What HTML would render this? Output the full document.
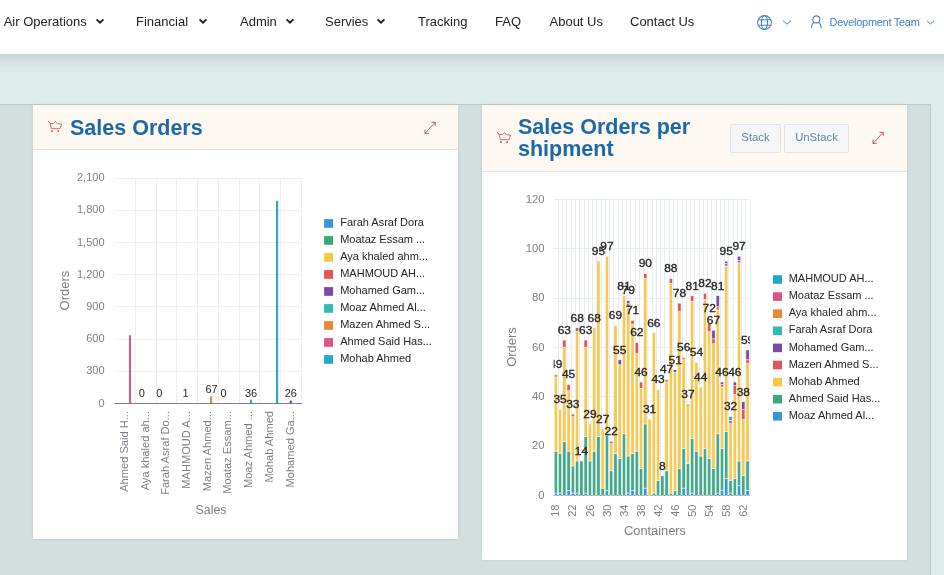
<!DOCTYPE html>
<html><head><meta charset="utf-8">
<style>
*{margin:0;padding:0;box-sizing:border-box}
html,body{width:944px;height:575px;overflow:hidden;background:#dfecec;font-family:"Liberation Sans", sans-serif}
#nav{position:absolute;left:0;top:0;width:944px;height:54px;background:#fff;z-index:5}
#navsh{position:absolute;left:-30px;top:0;width:1004px;height:54px;background:#fff;box-shadow:0 3px 16px rgba(50,85,80,0.22);z-index:4}
.nv{position:absolute;top:14px;font-size:13px;color:#222;white-space:nowrap;line-height:16px}
.chev{position:absolute}
#nav,.card,#charts{will-change:transform}
#wrap{position:absolute;left:0;top:104px;width:931px;height:480px;background:#d3dfdf;border-top:1px solid #bccaca;border-right:1px solid #bccaca}
.card{position:absolute;background:#fff;box-shadow:0 0 3px rgba(0,0,0,0.09)}
.hdr{position:absolute;left:0;top:0;width:100%;background:#fdf8f2;border-bottom:1px solid #e9e4df}
.ttl{position:absolute;font-weight:bold;font-size:21.5px;color:#1b69a8;line-height:21px}
.btn{position:absolute;top:19px;height:29px;background:#f5f6f8;border:1px solid #e1e3e6;border-radius:2px;font-size:11.3px;color:#6383aa;line-height:25px;text-align:center}
</style></head><body>
<div id="navsh"></div>
<div id="nav">
<span class="nv" style="left:3.7px">Air Operations</span>
<span class="nv" style="left:136px">Financial</span>
<span class="nv" style="left:240px">Admin</span>
<span class="nv" style="left:325px">Servies</span>
<span class="nv" style="left:418px">Tracking</span>
<span class="nv" style="left:495px">FAQ</span>
<span class="nv" style="left:549.5px">About Us</span>
<span class="nv" style="left:630px">Contact Us</span>
<svg class="chev" style="left:94.5px;top:17px" width="10" height="8" viewBox="0 0 10 8"><path d="M1.6 2.4 L5 5.6 L8.4 2.4" fill="none" stroke="#1e1e1e" stroke-width="1.9"/></svg>
<svg class="chev" style="left:197.5px;top:17px" width="10" height="8" viewBox="0 0 10 8"><path d="M1.6 2.4 L5 5.6 L8.4 2.4" fill="none" stroke="#1e1e1e" stroke-width="1.9"/></svg>
<svg class="chev" style="left:285px;top:17px" width="10" height="8" viewBox="0 0 10 8"><path d="M1.6 2.4 L5 5.6 L8.4 2.4" fill="none" stroke="#1e1e1e" stroke-width="1.9"/></svg>
<svg class="chev" style="left:376px;top:17px" width="10" height="8" viewBox="0 0 10 8"><path d="M1.6 2.4 L5 5.6 L8.4 2.4" fill="none" stroke="#1e1e1e" stroke-width="1.9"/></svg>
<svg style="position:absolute;left:756px;top:13.5px" width="17" height="17" viewBox="0 0 17 17">
<g fill="none" stroke="#4c80b8" stroke-width="1.1"><circle cx="8.5" cy="8.5" r="6.9"/><ellipse cx="8.5" cy="8.5" rx="3.1" ry="6.9"/><path d="M2.1 5.8H14.9M2.1 11.2H14.9"/></g></svg>
<svg style="position:absolute;left:782px;top:19.5px" width="10" height="5" viewBox="0 0 10 5"><path d="M1 0.8 L5 4.2 L9 0.8" fill="none" stroke="#4a86c6" stroke-width="1"/></svg>
<svg style="position:absolute;left:809px;top:15px" width="14" height="14" viewBox="0 0 14 14">
<g fill="none" stroke="#4c80b8" stroke-width="1.1" stroke-linecap="round"><circle cx="7.3" cy="4.4" r="3.5"/><path d="M5.3 7.6 C3.2 8.4 2.6 10.4 2.5 12.6"/><path d="M9.3 7.6 C11.4 8.4 12 10.4 12.1 12.6"/></g></svg>
<span class="nv" style="left:829.5px;top:14px;font-size:11px;color:#4380c3;letter-spacing:-0.28px">Development Team</span>
<svg style="position:absolute;left:926px;top:19.5px" width="9" height="5" viewBox="0 0 9 5"><path d="M1 0.8 L4.5 4 L8 0.8" fill="none" stroke="#4a86c6" stroke-width="1"/></svg>
</div>
<div id="wrap"></div>
<div class="card" style="left:33px;top:105px;width:425px;height:434px">
  <div class="hdr" style="height:45px"></div>
  <svg style="position:absolute;left:14px;top:15px" width="16" height="13" viewBox="0 0 16 13">
<g fill="none" stroke="#de5562" stroke-width="0.9" stroke-linejoin="round" stroke-linecap="round"><path d="M1.3 1.3 L3 3.3 L6.4 3.5 L8.5 1.5 L10.5 3.8 L14.6 4.1 L13 8.7 L4.3 8.7 L3 3.3"/></g>
<g fill="#a8353f"><circle cx="5" cy="11.1" r="0.95"/><circle cx="11.3" cy="11.1" r="0.95"/></g></svg>
  <div class="ttl" style="left:37px;top:13px">Sales Orders</div>
  <svg style="position:absolute;left:389.5px;top:14.5px" width="15" height="15" viewBox="0 0 15 15">
<g fill="none" stroke="#c8404f" stroke-width="0.85" stroke-linecap="round"><path d="M2.2 13.2 L12 2.6"/><path d="M9 2.3 H12.3 V5.6"/><path d="M2 10 V13.4 H5.3"/></g></svg>
  <div id="c1" style="position:absolute;left:0;top:0"><!--CHART1--></div>
</div>
<div class="card" style="left:482px;top:105px;width:425px;height:455px">
  <div class="hdr" style="height:67px"></div>
  <svg style="position:absolute;left:14.2px;top:25.7px" width="16" height="13" viewBox="0 0 16 13">
<g fill="none" stroke="#de5562" stroke-width="0.9" stroke-linejoin="round" stroke-linecap="round"><path d="M1.3 1.3 L3 3.3 L6.4 3.5 L8.5 1.5 L10.5 3.8 L14.6 4.1 L13 8.7 L4.3 8.7 L3 3.3"/></g>
<g fill="#a8353f"><circle cx="5" cy="11.1" r="0.95"/><circle cx="11.3" cy="11.1" r="0.95"/></g></svg>
  <div class="ttl" style="left:36px;top:12px;width:200px;line-height:21.5px">Sales Orders per shipment</div>
  <div class="btn" style="left:248px;width:51px">Stack</div>
  <div class="btn" style="left:302px;width:65px">UnStack</div>
  <svg style="position:absolute;left:389px;top:25px" width="15" height="15" viewBox="0 0 15 15">
<g fill="none" stroke="#c8404f" stroke-width="0.85" stroke-linecap="round"><path d="M2.2 13.2 L12 2.6"/><path d="M9 2.3 H12.3 V5.6"/><path d="M2 10 V13.4 H5.3"/></g></svg>
  <div id="c2" style="position:absolute;left:0;top:0"><!--CHART2--></div>
</div>
<svg id="charts" style="position:absolute;left:0;top:0;z-index:3" width="944" height="575" viewBox="0 0 944 575" font-family="Liberation Sans, sans-serif">
<line x1="114.5" y1="371.50" x2="302.0" y2="371.50" stroke="#eeeeee" stroke-width="1"/>
<line x1="114.5" y1="339.50" x2="302.0" y2="339.50" stroke="#eeeeee" stroke-width="1"/>
<line x1="114.5" y1="306.50" x2="302.0" y2="306.50" stroke="#eeeeee" stroke-width="1"/>
<line x1="114.5" y1="274.50" x2="302.0" y2="274.50" stroke="#eeeeee" stroke-width="1"/>
<line x1="114.5" y1="242.50" x2="302.0" y2="242.50" stroke="#eeeeee" stroke-width="1"/>
<line x1="114.5" y1="210.50" x2="302.0" y2="210.50" stroke="#eeeeee" stroke-width="1"/>
<line x1="114.5" y1="178.50" x2="302.0" y2="178.50" stroke="#eeeeee" stroke-width="1"/>
<line x1="135.50" y1="178.50" x2="135.50" y2="403.5" stroke="#eeeeee" stroke-width="1"/>
<line x1="156.50" y1="178.50" x2="156.50" y2="403.5" stroke="#eeeeee" stroke-width="1"/>
<line x1="176.50" y1="178.50" x2="176.50" y2="403.5" stroke="#eeeeee" stroke-width="1"/>
<line x1="197.50" y1="178.50" x2="197.50" y2="403.5" stroke="#eeeeee" stroke-width="1"/>
<line x1="218.50" y1="178.50" x2="218.50" y2="403.5" stroke="#eeeeee" stroke-width="1"/>
<line x1="239.50" y1="178.50" x2="239.50" y2="403.5" stroke="#eeeeee" stroke-width="1"/>
<line x1="259.50" y1="178.50" x2="259.50" y2="403.5" stroke="#eeeeee" stroke-width="1"/>
<line x1="280.50" y1="178.50" x2="280.50" y2="403.5" stroke="#eeeeee" stroke-width="1"/>
<line x1="301.50" y1="178.50" x2="301.50" y2="403.5" stroke="#eeeeee" stroke-width="1"/>
<text x="104.5" y="406.50" text-anchor="end" font-size="11" fill="#7d7f86">0</text>
<text x="104.5" y="374.30" text-anchor="end" font-size="11" fill="#7d7f86">300</text>
<text x="104.5" y="342.10" text-anchor="end" font-size="11" fill="#7d7f86">600</text>
<text x="104.5" y="309.90" text-anchor="end" font-size="11" fill="#7d7f86">900</text>
<text x="104.5" y="277.70" text-anchor="end" font-size="11" fill="#7d7f86">1,200</text>
<text x="104.5" y="245.50" text-anchor="end" font-size="11" fill="#7d7f86">1,500</text>
<text x="104.5" y="213.30" text-anchor="end" font-size="11" fill="#7d7f86">1,800</text>
<text x="104.5" y="181.10" text-anchor="end" font-size="11" fill="#7d7f86">2,100</text>
<text transform="translate(69,290.6) rotate(-90)" text-anchor="middle" font-size="13" fill="#7d7f86">Orders</text>
<text x="211" y="513.8" text-anchor="middle" font-size="12.3" fill="#7d7f86">Sales</text>
<rect x="128.90" y="335.24" width="2.2" height="68.26" fill="#c2658e"/>
<rect x="276.00" y="200.75" width="2.2" height="202.75" fill="#2ea7c1"/>
<rect x="210.00" y="396.31" width="2.2" height="7.19" fill="#e08a4a"/>
<rect x="249.90" y="399.64" width="2.2" height="3.86" fill="#3bb0a6"/>
<rect x="289.70" y="400.71" width="2.2" height="2.79" fill="#5a4a78"/>
<line x1="114.5" y1="403.5" x2="302.0" y2="403.5" stroke="#7d7f86" stroke-width="1"/>
<text x="141.8" y="397.2" text-anchor="middle" font-size="11" fill="#262626">0</text>
<text x="159.2" y="397.2" text-anchor="middle" font-size="11" fill="#262626">0</text>
<text x="185.6" y="397.2" text-anchor="middle" font-size="11" fill="#262626">1</text>
<text x="211.5" y="393.2" text-anchor="middle" font-size="11" fill="#262626">67</text>
<text x="223.5" y="397.2" text-anchor="middle" font-size="11" fill="#262626">0</text>
<text x="251.0" y="396.6" text-anchor="middle" font-size="11" fill="#262626">36</text>
<text x="290.8" y="396.9" text-anchor="middle" font-size="11" fill="#262626">26</text>
<text transform="translate(127.80,411) rotate(-90)" text-anchor="end" font-size="11.1" fill="#7d7f86">Ahmed Said H...</text>
<text transform="translate(148.53,411) rotate(-90)" text-anchor="end" font-size="11.1" fill="#7d7f86">Aya khaled ah...</text>
<text transform="translate(169.26,411) rotate(-90)" text-anchor="end" font-size="11.1" fill="#7d7f86">Farah Asraf Do...</text>
<text transform="translate(189.99,411) rotate(-90)" text-anchor="end" font-size="11.1" fill="#7d7f86">MAHMOUD A...</text>
<text transform="translate(210.72,411) rotate(-90)" text-anchor="end" font-size="11.1" fill="#7d7f86">Mazen Ahmed...</text>
<text transform="translate(231.45,411) rotate(-90)" text-anchor="end" font-size="11.1" fill="#7d7f86">Moataz Essam...</text>
<text transform="translate(252.18,411) rotate(-90)" text-anchor="end" font-size="11.1" fill="#7d7f86">Moaz Ahmed ...</text>
<text transform="translate(272.91,411) rotate(-90)" text-anchor="end" font-size="11.1" fill="#7d7f86">Mohab Ahmed</text>
<text transform="translate(293.64,411) rotate(-90)" text-anchor="end" font-size="11.1" fill="#7d7f86">Mohamed Ga...</text>
<rect x="324.1" y="219.10" width="9" height="8.7" fill="#3398db"/>
<text x="340.2" y="226.40" font-size="11" fill="#262626">Farah Asraf Dora</text>
<rect x="324.1" y="236.10" width="9" height="8.7" fill="#3ba87a"/>
<text x="340.2" y="243.40" font-size="11" fill="#262626">Moataz Essam ...</text>
<rect x="324.1" y="253.10" width="9" height="8.7" fill="#f5c843"/>
<text x="340.2" y="260.40" font-size="11" fill="#262626">Aya khaled ahm...</text>
<rect x="324.1" y="270.10" width="9" height="8.7" fill="#e0555a"/>
<text x="340.2" y="277.40" font-size="11" fill="#262626">MAHMOUD AH...</text>
<rect x="324.1" y="287.10" width="9" height="8.7" fill="#7c4aa3"/>
<text x="340.2" y="294.40" font-size="11" fill="#262626">Mohamed Gam...</text>
<rect x="324.1" y="304.10" width="9" height="8.7" fill="#2fbcb0"/>
<text x="340.2" y="311.40" font-size="11" fill="#262626">Moaz Ahmed Al...</text>
<rect x="324.1" y="321.10" width="9" height="8.7" fill="#ef8434"/>
<text x="340.2" y="328.40" font-size="11" fill="#262626">Mazen Ahmed S...</text>
<rect x="324.1" y="338.10" width="9" height="8.7" fill="#df5189"/>
<text x="340.2" y="345.40" font-size="11" fill="#262626">Ahmed Said Has...</text>
<rect x="324.1" y="355.10" width="9" height="8.7" fill="#1ea8cb"/>
<text x="340.2" y="362.40" font-size="11" fill="#262626">Mohab Ahmed</text>
<line x1="553.7" y1="446.50" x2="749.7" y2="446.50" stroke="#e8ecf4" stroke-width="1"/>
<line x1="553.7" y1="396.50" x2="749.7" y2="396.50" stroke="#e8ecf4" stroke-width="1"/>
<line x1="553.7" y1="347.50" x2="749.7" y2="347.50" stroke="#e8ecf4" stroke-width="1"/>
<line x1="553.7" y1="298.50" x2="749.7" y2="298.50" stroke="#e8ecf4" stroke-width="1"/>
<line x1="553.7" y1="248.50" x2="749.7" y2="248.50" stroke="#e8ecf4" stroke-width="1"/>
<line x1="553.7" y1="199.50" x2="749.7" y2="199.50" stroke="#e8ecf4" stroke-width="1"/>
<line x1="558.50" y1="199.50" x2="558.50" y2="495.5" stroke="#e8ecf4" stroke-width="1"/>
<line x1="562.50" y1="199.50" x2="562.50" y2="495.5" stroke="#e8ecf4" stroke-width="1"/>
<line x1="566.50" y1="199.50" x2="566.50" y2="495.5" stroke="#e8ecf4" stroke-width="1"/>
<line x1="571.50" y1="199.50" x2="571.50" y2="495.5" stroke="#e8ecf4" stroke-width="1"/>
<line x1="575.50" y1="199.50" x2="575.50" y2="495.5" stroke="#e8ecf4" stroke-width="1"/>
<line x1="579.50" y1="199.50" x2="579.50" y2="495.5" stroke="#e8ecf4" stroke-width="1"/>
<line x1="584.50" y1="199.50" x2="584.50" y2="495.5" stroke="#e8ecf4" stroke-width="1"/>
<line x1="588.50" y1="199.50" x2="588.50" y2="495.5" stroke="#e8ecf4" stroke-width="1"/>
<line x1="592.50" y1="199.50" x2="592.50" y2="495.5" stroke="#e8ecf4" stroke-width="1"/>
<line x1="596.50" y1="199.50" x2="596.50" y2="495.5" stroke="#e8ecf4" stroke-width="1"/>
<line x1="601.50" y1="199.50" x2="601.50" y2="495.5" stroke="#e8ecf4" stroke-width="1"/>
<line x1="605.50" y1="199.50" x2="605.50" y2="495.5" stroke="#e8ecf4" stroke-width="1"/>
<line x1="609.50" y1="199.50" x2="609.50" y2="495.5" stroke="#e8ecf4" stroke-width="1"/>
<line x1="613.50" y1="199.50" x2="613.50" y2="495.5" stroke="#e8ecf4" stroke-width="1"/>
<line x1="618.50" y1="199.50" x2="618.50" y2="495.5" stroke="#e8ecf4" stroke-width="1"/>
<line x1="622.50" y1="199.50" x2="622.50" y2="495.5" stroke="#e8ecf4" stroke-width="1"/>
<line x1="626.50" y1="199.50" x2="626.50" y2="495.5" stroke="#e8ecf4" stroke-width="1"/>
<line x1="630.50" y1="199.50" x2="630.50" y2="495.5" stroke="#e8ecf4" stroke-width="1"/>
<line x1="635.50" y1="199.50" x2="635.50" y2="495.5" stroke="#e8ecf4" stroke-width="1"/>
<line x1="639.50" y1="199.50" x2="639.50" y2="495.5" stroke="#e8ecf4" stroke-width="1"/>
<line x1="643.50" y1="199.50" x2="643.50" y2="495.5" stroke="#e8ecf4" stroke-width="1"/>
<line x1="647.50" y1="199.50" x2="647.50" y2="495.5" stroke="#e8ecf4" stroke-width="1"/>
<line x1="652.50" y1="199.50" x2="652.50" y2="495.5" stroke="#e8ecf4" stroke-width="1"/>
<line x1="656.50" y1="199.50" x2="656.50" y2="495.5" stroke="#e8ecf4" stroke-width="1"/>
<line x1="660.50" y1="199.50" x2="660.50" y2="495.5" stroke="#e8ecf4" stroke-width="1"/>
<line x1="664.50" y1="199.50" x2="664.50" y2="495.5" stroke="#e8ecf4" stroke-width="1"/>
<line x1="669.50" y1="199.50" x2="669.50" y2="495.5" stroke="#e8ecf4" stroke-width="1"/>
<line x1="673.50" y1="199.50" x2="673.50" y2="495.5" stroke="#e8ecf4" stroke-width="1"/>
<line x1="677.50" y1="199.50" x2="677.50" y2="495.5" stroke="#e8ecf4" stroke-width="1"/>
<line x1="682.50" y1="199.50" x2="682.50" y2="495.5" stroke="#e8ecf4" stroke-width="1"/>
<line x1="686.50" y1="199.50" x2="686.50" y2="495.5" stroke="#e8ecf4" stroke-width="1"/>
<line x1="690.50" y1="199.50" x2="690.50" y2="495.5" stroke="#e8ecf4" stroke-width="1"/>
<line x1="694.50" y1="199.50" x2="694.50" y2="495.5" stroke="#e8ecf4" stroke-width="1"/>
<line x1="699.50" y1="199.50" x2="699.50" y2="495.5" stroke="#e8ecf4" stroke-width="1"/>
<line x1="703.50" y1="199.50" x2="703.50" y2="495.5" stroke="#e8ecf4" stroke-width="1"/>
<line x1="707.50" y1="199.50" x2="707.50" y2="495.5" stroke="#e8ecf4" stroke-width="1"/>
<line x1="711.50" y1="199.50" x2="711.50" y2="495.5" stroke="#e8ecf4" stroke-width="1"/>
<line x1="716.50" y1="199.50" x2="716.50" y2="495.5" stroke="#e8ecf4" stroke-width="1"/>
<line x1="720.50" y1="199.50" x2="720.50" y2="495.5" stroke="#e8ecf4" stroke-width="1"/>
<line x1="724.50" y1="199.50" x2="724.50" y2="495.5" stroke="#e8ecf4" stroke-width="1"/>
<line x1="728.50" y1="199.50" x2="728.50" y2="495.5" stroke="#e8ecf4" stroke-width="1"/>
<line x1="733.50" y1="199.50" x2="733.50" y2="495.5" stroke="#e8ecf4" stroke-width="1"/>
<line x1="737.50" y1="199.50" x2="737.50" y2="495.5" stroke="#e8ecf4" stroke-width="1"/>
<line x1="741.50" y1="199.50" x2="741.50" y2="495.5" stroke="#e8ecf4" stroke-width="1"/>
<line x1="745.50" y1="199.50" x2="745.50" y2="495.5" stroke="#e8ecf4" stroke-width="1"/>
<line x1="750.50" y1="199.50" x2="750.50" y2="495.5" stroke="#e8ecf4" stroke-width="1"/>
<text x="544.5" y="498.70" text-anchor="end" font-size="11.3" fill="#7d7f86">0</text>
<text x="544.5" y="449.37" text-anchor="end" font-size="11.3" fill="#7d7f86">20</text>
<text x="544.5" y="400.03" text-anchor="end" font-size="11.3" fill="#7d7f86">40</text>
<text x="544.5" y="350.70" text-anchor="end" font-size="11.3" fill="#7d7f86">60</text>
<text x="544.5" y="301.36" text-anchor="end" font-size="11.3" fill="#7d7f86">80</text>
<text x="544.5" y="252.03" text-anchor="end" font-size="11.3" fill="#7d7f86">100</text>
<text x="544.5" y="202.70" text-anchor="end" font-size="11.3" fill="#7d7f86">120</text>
<text transform="translate(516.2,347) rotate(-90)" text-anchor="middle" font-size="13" fill="#7d7f86">Orders</text>
<text x="655" y="534.6" text-anchor="middle" font-size="12.8" fill="#7d7f86">Containers</text>
<line x1="553.7" y1="495.5" x2="749.7" y2="495.5" stroke="#7d7f86" stroke-width="1"/>
<rect x="554.20" y="493.03" width="3.26" height="2.47" fill="#3398db" stroke="#fff" stroke-width="0.5"/>
<rect x="554.20" y="451.10" width="3.26" height="41.93" fill="#46a88a" stroke="#fff" stroke-width="0.5"/>
<rect x="554.20" y="377.10" width="3.26" height="74.00" fill="#f3ca58" stroke="#fff" stroke-width="0.5"/>
<rect x="554.20" y="374.63" width="3.26" height="2.47" fill="#ef8434" stroke="#fff" stroke-width="0.5"/>
<rect x="558.46" y="493.03" width="3.26" height="2.47" fill="#3398db" stroke="#fff" stroke-width="0.5"/>
<rect x="558.46" y="453.57" width="3.26" height="39.47" fill="#46a88a" stroke="#fff" stroke-width="0.5"/>
<rect x="558.46" y="409.17" width="3.26" height="44.40" fill="#f3ca58" stroke="#fff" stroke-width="0.5"/>
<rect x="562.72" y="441.23" width="3.26" height="54.27" fill="#46a88a" stroke="#fff" stroke-width="0.5"/>
<rect x="562.72" y="347.50" width="3.26" height="93.73" fill="#f3ca58" stroke="#fff" stroke-width="0.5"/>
<rect x="562.72" y="340.10" width="3.26" height="7.40" fill="#e0555a" stroke="#fff" stroke-width="0.5"/>
<rect x="566.98" y="490.57" width="3.26" height="4.93" fill="#3398db" stroke="#fff" stroke-width="0.5"/>
<rect x="566.98" y="451.10" width="3.26" height="39.47" fill="#46a88a" stroke="#fff" stroke-width="0.5"/>
<rect x="566.98" y="390.67" width="3.26" height="60.43" fill="#f3ca58" stroke="#fff" stroke-width="0.5"/>
<rect x="566.98" y="384.50" width="3.26" height="6.17" fill="#e0555a" stroke="#fff" stroke-width="0.5"/>
<rect x="571.24" y="493.03" width="3.26" height="2.47" fill="#3398db" stroke="#fff" stroke-width="0.5"/>
<rect x="571.24" y="465.90" width="3.26" height="27.13" fill="#46a88a" stroke="#fff" stroke-width="0.5"/>
<rect x="571.24" y="416.57" width="3.26" height="49.33" fill="#f3ca58" stroke="#fff" stroke-width="0.5"/>
<rect x="571.24" y="414.10" width="3.26" height="2.47" fill="#e0555a" stroke="#fff" stroke-width="0.5"/>
<rect x="575.50" y="493.03" width="3.26" height="2.47" fill="#3398db" stroke="#fff" stroke-width="0.5"/>
<rect x="575.50" y="460.97" width="3.26" height="32.07" fill="#46a88a" stroke="#fff" stroke-width="0.5"/>
<rect x="575.50" y="331.46" width="3.26" height="129.50" fill="#f3ca58" stroke="#fff" stroke-width="0.5"/>
<rect x="575.50" y="327.76" width="3.26" height="3.70" fill="#e0555a" stroke="#fff" stroke-width="0.5"/>
<rect x="579.77" y="460.97" width="3.26" height="34.53" fill="#46a88a" stroke="#fff" stroke-width="0.5"/>
<rect x="584.03" y="493.03" width="3.26" height="2.47" fill="#3398db" stroke="#fff" stroke-width="0.5"/>
<rect x="584.03" y="436.30" width="3.26" height="56.73" fill="#46a88a" stroke="#fff" stroke-width="0.5"/>
<rect x="584.03" y="347.50" width="3.26" height="88.80" fill="#f3ca58" stroke="#fff" stroke-width="0.5"/>
<rect x="584.03" y="340.10" width="3.26" height="7.40" fill="#e0555a" stroke="#fff" stroke-width="0.5"/>
<rect x="588.29" y="460.97" width="3.26" height="34.53" fill="#46a88a" stroke="#fff" stroke-width="0.5"/>
<rect x="588.29" y="423.97" width="3.26" height="37.00" fill="#f3ca58" stroke="#fff" stroke-width="0.5"/>
<rect x="592.55" y="451.10" width="3.26" height="44.40" fill="#46a88a" stroke="#fff" stroke-width="0.5"/>
<rect x="592.55" y="327.76" width="3.26" height="123.33" fill="#f3ca58" stroke="#fff" stroke-width="0.5"/>
<rect x="596.81" y="436.30" width="3.26" height="59.20" fill="#46a88a" stroke="#fff" stroke-width="0.5"/>
<rect x="596.81" y="262.64" width="3.26" height="173.66" fill="#f3ca58" stroke="#fff" stroke-width="0.5"/>
<rect x="596.81" y="261.16" width="3.26" height="1.48" fill="#ef8434" stroke="#fff" stroke-width="0.5"/>
<rect x="601.07" y="488.10" width="3.26" height="7.40" fill="#46a88a" stroke="#fff" stroke-width="0.5"/>
<rect x="601.07" y="428.90" width="3.26" height="59.20" fill="#f3ca58" stroke="#fff" stroke-width="0.5"/>
<rect x="605.33" y="490.57" width="3.26" height="4.93" fill="#3398db" stroke="#fff" stroke-width="0.5"/>
<rect x="605.33" y="435.07" width="3.26" height="55.50" fill="#46a88a" stroke="#fff" stroke-width="0.5"/>
<rect x="605.33" y="256.23" width="3.26" height="178.84" fill="#f3ca58" stroke="#fff" stroke-width="0.5"/>
<rect x="609.59" y="470.83" width="3.26" height="24.67" fill="#46a88a" stroke="#fff" stroke-width="0.5"/>
<rect x="609.59" y="443.70" width="3.26" height="27.13" fill="#f3ca58" stroke="#fff" stroke-width="0.5"/>
<rect x="609.59" y="441.23" width="3.26" height="2.47" fill="#e0555a" stroke="#fff" stroke-width="0.5"/>
<rect x="613.85" y="453.57" width="3.26" height="41.93" fill="#46a88a" stroke="#fff" stroke-width="0.5"/>
<rect x="613.85" y="325.30" width="3.26" height="128.27" fill="#f3ca58" stroke="#fff" stroke-width="0.5"/>
<rect x="618.11" y="458.50" width="3.26" height="37.00" fill="#46a88a" stroke="#fff" stroke-width="0.5"/>
<rect x="618.11" y="364.76" width="3.26" height="93.73" fill="#f3ca58" stroke="#fff" stroke-width="0.5"/>
<rect x="618.11" y="359.83" width="3.26" height="4.93" fill="#7c4aa3" stroke="#fff" stroke-width="0.5"/>
<rect x="622.37" y="433.83" width="3.26" height="61.67" fill="#46a88a" stroke="#fff" stroke-width="0.5"/>
<rect x="622.37" y="295.70" width="3.26" height="138.14" fill="#f3ca58" stroke="#fff" stroke-width="0.5"/>
<rect x="626.63" y="493.03" width="3.26" height="2.47" fill="#3398db" stroke="#fff" stroke-width="0.5"/>
<rect x="626.63" y="456.03" width="3.26" height="37.00" fill="#46a88a" stroke="#fff" stroke-width="0.5"/>
<rect x="626.63" y="307.29" width="3.26" height="148.74" fill="#f3ca58" stroke="#fff" stroke-width="0.5"/>
<rect x="626.63" y="303.59" width="3.26" height="3.70" fill="#e0555a" stroke="#fff" stroke-width="0.5"/>
<rect x="626.63" y="300.63" width="3.26" height="2.96" fill="#7c4aa3" stroke="#fff" stroke-width="0.5"/>
<rect x="630.90" y="490.57" width="3.26" height="4.93" fill="#3398db" stroke="#fff" stroke-width="0.5"/>
<rect x="630.90" y="453.57" width="3.26" height="37.00" fill="#46a88a" stroke="#fff" stroke-width="0.5"/>
<rect x="630.90" y="324.06" width="3.26" height="129.50" fill="#f3ca58" stroke="#fff" stroke-width="0.5"/>
<rect x="630.90" y="320.36" width="3.26" height="3.70" fill="#e0555a" stroke="#fff" stroke-width="0.5"/>
<rect x="635.16" y="451.10" width="3.26" height="44.40" fill="#46a88a" stroke="#fff" stroke-width="0.5"/>
<rect x="635.16" y="353.66" width="3.26" height="97.43" fill="#f3ca58" stroke="#fff" stroke-width="0.5"/>
<rect x="635.16" y="342.56" width="3.26" height="11.10" fill="#e0555a" stroke="#fff" stroke-width="0.5"/>
<rect x="639.42" y="468.37" width="3.26" height="27.13" fill="#46a88a" stroke="#fff" stroke-width="0.5"/>
<rect x="639.42" y="388.20" width="3.26" height="80.17" fill="#f3ca58" stroke="#fff" stroke-width="0.5"/>
<rect x="639.42" y="382.03" width="3.26" height="6.17" fill="#e0555a" stroke="#fff" stroke-width="0.5"/>
<rect x="643.68" y="488.10" width="3.26" height="7.40" fill="#3398db" stroke="#fff" stroke-width="0.5"/>
<rect x="643.68" y="423.97" width="3.26" height="64.13" fill="#46a88a" stroke="#fff" stroke-width="0.5"/>
<rect x="643.68" y="278.43" width="3.26" height="145.54" fill="#f3ca58" stroke="#fff" stroke-width="0.5"/>
<rect x="643.68" y="273.50" width="3.26" height="4.93" fill="#e0555a" stroke="#fff" stroke-width="0.5"/>
<rect x="647.94" y="419.03" width="3.26" height="76.47" fill="#f3ca58" stroke="#fff" stroke-width="0.5"/>
<rect x="652.20" y="493.03" width="3.26" height="2.47" fill="#46a88a" stroke="#fff" stroke-width="0.5"/>
<rect x="652.20" y="332.70" width="3.26" height="160.34" fill="#f3ca58" stroke="#fff" stroke-width="0.5"/>
<rect x="656.46" y="480.70" width="3.26" height="14.80" fill="#46a88a" stroke="#fff" stroke-width="0.5"/>
<rect x="656.46" y="389.43" width="3.26" height="91.27" fill="#f3ca58" stroke="#fff" stroke-width="0.5"/>
<rect x="660.72" y="475.77" width="3.26" height="19.73" fill="#46a88a" stroke="#fff" stroke-width="0.5"/>
<rect x="664.98" y="470.83" width="3.26" height="24.67" fill="#46a88a" stroke="#fff" stroke-width="0.5"/>
<rect x="664.98" y="382.03" width="3.26" height="88.80" fill="#f3ca58" stroke="#fff" stroke-width="0.5"/>
<rect x="664.98" y="379.57" width="3.26" height="2.47" fill="#ef8434" stroke="#fff" stroke-width="0.5"/>
<rect x="669.24" y="493.03" width="3.26" height="2.47" fill="#46a88a" stroke="#fff" stroke-width="0.5"/>
<rect x="669.24" y="283.36" width="3.26" height="209.67" fill="#f3ca58" stroke="#fff" stroke-width="0.5"/>
<rect x="669.24" y="278.43" width="3.26" height="4.93" fill="#e0555a" stroke="#fff" stroke-width="0.5"/>
<rect x="673.50" y="490.57" width="3.26" height="4.93" fill="#46a88a" stroke="#fff" stroke-width="0.5"/>
<rect x="673.50" y="372.17" width="3.26" height="118.40" fill="#f3ca58" stroke="#fff" stroke-width="0.5"/>
<rect x="673.50" y="369.70" width="3.26" height="2.47" fill="#7c4aa3" stroke="#fff" stroke-width="0.5"/>
<rect x="677.77" y="468.37" width="3.26" height="27.13" fill="#46a88a" stroke="#fff" stroke-width="0.5"/>
<rect x="677.77" y="311.48" width="3.26" height="156.88" fill="#f3ca58" stroke="#fff" stroke-width="0.5"/>
<rect x="677.77" y="303.10" width="3.26" height="8.39" fill="#e0555a" stroke="#fff" stroke-width="0.5"/>
<rect x="682.03" y="488.10" width="3.26" height="7.40" fill="#3398db" stroke="#fff" stroke-width="0.5"/>
<rect x="682.03" y="448.63" width="3.26" height="39.47" fill="#46a88a" stroke="#fff" stroke-width="0.5"/>
<rect x="682.03" y="359.83" width="3.26" height="88.80" fill="#f3ca58" stroke="#fff" stroke-width="0.5"/>
<rect x="682.03" y="357.36" width="3.26" height="2.47" fill="#ef8434" stroke="#fff" stroke-width="0.5"/>
<rect x="686.29" y="463.43" width="3.26" height="32.07" fill="#46a88a" stroke="#fff" stroke-width="0.5"/>
<rect x="686.29" y="406.70" width="3.26" height="56.73" fill="#f3ca58" stroke="#fff" stroke-width="0.5"/>
<rect x="686.29" y="404.23" width="3.26" height="2.47" fill="#ef8434" stroke="#fff" stroke-width="0.5"/>
<rect x="690.55" y="493.03" width="3.26" height="2.47" fill="#3398db" stroke="#fff" stroke-width="0.5"/>
<rect x="690.55" y="438.77" width="3.26" height="54.27" fill="#46a88a" stroke="#fff" stroke-width="0.5"/>
<rect x="690.55" y="301.37" width="3.26" height="137.40" fill="#f3ca58" stroke="#fff" stroke-width="0.5"/>
<rect x="690.55" y="295.70" width="3.26" height="5.67" fill="#e0555a" stroke="#fff" stroke-width="0.5"/>
<rect x="694.81" y="451.10" width="3.26" height="44.40" fill="#46a88a" stroke="#fff" stroke-width="0.5"/>
<rect x="694.81" y="362.30" width="3.26" height="88.80" fill="#f3ca58" stroke="#fff" stroke-width="0.5"/>
<rect x="699.07" y="456.03" width="3.26" height="39.47" fill="#46a88a" stroke="#fff" stroke-width="0.5"/>
<rect x="699.07" y="386.97" width="3.26" height="69.07" fill="#f3ca58" stroke="#fff" stroke-width="0.5"/>
<rect x="703.33" y="448.63" width="3.26" height="46.87" fill="#46a88a" stroke="#fff" stroke-width="0.5"/>
<rect x="703.33" y="299.40" width="3.26" height="149.24" fill="#f3ca58" stroke="#fff" stroke-width="0.5"/>
<rect x="703.33" y="293.23" width="3.26" height="6.17" fill="#e0555a" stroke="#fff" stroke-width="0.5"/>
<rect x="707.59" y="458.50" width="3.26" height="37.00" fill="#46a88a" stroke="#fff" stroke-width="0.5"/>
<rect x="707.59" y="331.71" width="3.26" height="126.79" fill="#f3ca58" stroke="#fff" stroke-width="0.5"/>
<rect x="707.59" y="323.32" width="3.26" height="8.39" fill="#e0555a" stroke="#fff" stroke-width="0.5"/>
<rect x="711.85" y="468.37" width="3.26" height="27.13" fill="#46a88a" stroke="#fff" stroke-width="0.5"/>
<rect x="711.85" y="343.80" width="3.26" height="124.57" fill="#f3ca58" stroke="#fff" stroke-width="0.5"/>
<rect x="711.85" y="338.86" width="3.26" height="4.93" fill="#e0555a" stroke="#fff" stroke-width="0.5"/>
<rect x="711.85" y="330.23" width="3.26" height="8.63" fill="#7c4aa3" stroke="#fff" stroke-width="0.5"/>
<rect x="716.11" y="493.03" width="3.26" height="2.47" fill="#3398db" stroke="#fff" stroke-width="0.5"/>
<rect x="716.11" y="433.83" width="3.26" height="59.20" fill="#46a88a" stroke="#fff" stroke-width="0.5"/>
<rect x="716.11" y="310.00" width="3.26" height="123.83" fill="#f3ca58" stroke="#fff" stroke-width="0.5"/>
<rect x="716.11" y="306.80" width="3.26" height="3.21" fill="#ef8434" stroke="#fff" stroke-width="0.5"/>
<rect x="716.11" y="295.70" width="3.26" height="11.10" fill="#7c4aa3" stroke="#fff" stroke-width="0.5"/>
<rect x="720.37" y="490.57" width="3.26" height="4.93" fill="#3398db" stroke="#fff" stroke-width="0.5"/>
<rect x="720.37" y="448.63" width="3.26" height="41.93" fill="#46a88a" stroke="#fff" stroke-width="0.5"/>
<rect x="720.37" y="386.97" width="3.26" height="61.67" fill="#f3ca58" stroke="#fff" stroke-width="0.5"/>
<rect x="720.37" y="384.50" width="3.26" height="2.47" fill="#e0555a" stroke="#fff" stroke-width="0.5"/>
<rect x="720.37" y="382.03" width="3.26" height="2.47" fill="#7c4aa3" stroke="#fff" stroke-width="0.5"/>
<rect x="724.63" y="478.23" width="3.26" height="17.27" fill="#3398db" stroke="#fff" stroke-width="0.5"/>
<rect x="724.63" y="431.37" width="3.26" height="46.87" fill="#46a88a" stroke="#fff" stroke-width="0.5"/>
<rect x="724.63" y="266.10" width="3.26" height="165.27" fill="#f3ca58" stroke="#fff" stroke-width="0.5"/>
<rect x="724.63" y="263.63" width="3.26" height="2.47" fill="#e0555a" stroke="#fff" stroke-width="0.5"/>
<rect x="724.63" y="261.16" width="3.26" height="2.47" fill="#7c4aa3" stroke="#fff" stroke-width="0.5"/>
<rect x="728.90" y="493.03" width="3.26" height="2.47" fill="#3398db" stroke="#fff" stroke-width="0.5"/>
<rect x="728.90" y="480.70" width="3.26" height="12.33" fill="#46a88a" stroke="#fff" stroke-width="0.5"/>
<rect x="728.90" y="423.47" width="3.26" height="57.23" fill="#f3ca58" stroke="#fff" stroke-width="0.5"/>
<rect x="728.90" y="420.27" width="3.26" height="3.21" fill="#e0555a" stroke="#fff" stroke-width="0.5"/>
<rect x="728.90" y="416.57" width="3.26" height="3.70" fill="#1ea8cb" stroke="#fff" stroke-width="0.5"/>
<rect x="733.16" y="478.23" width="3.26" height="17.27" fill="#46a88a" stroke="#fff" stroke-width="0.5"/>
<rect x="733.16" y="394.37" width="3.26" height="83.87" fill="#f3ca58" stroke="#fff" stroke-width="0.5"/>
<rect x="733.16" y="385.73" width="3.26" height="8.63" fill="#e0555a" stroke="#fff" stroke-width="0.5"/>
<rect x="733.16" y="382.03" width="3.26" height="3.70" fill="#7c4aa3" stroke="#fff" stroke-width="0.5"/>
<rect x="737.42" y="485.63" width="3.26" height="9.87" fill="#3398db" stroke="#fff" stroke-width="0.5"/>
<rect x="737.42" y="460.97" width="3.26" height="24.67" fill="#46a88a" stroke="#fff" stroke-width="0.5"/>
<rect x="737.42" y="262.89" width="3.26" height="198.08" fill="#f3ca58" stroke="#fff" stroke-width="0.5"/>
<rect x="737.42" y="260.42" width="3.26" height="2.47" fill="#df5189" stroke="#fff" stroke-width="0.5"/>
<rect x="737.42" y="256.23" width="3.26" height="4.19" fill="#7c4aa3" stroke="#fff" stroke-width="0.5"/>
<rect x="741.68" y="475.77" width="3.26" height="19.73" fill="#46a88a" stroke="#fff" stroke-width="0.5"/>
<rect x="741.68" y="419.53" width="3.26" height="56.24" fill="#f3ca58" stroke="#fff" stroke-width="0.5"/>
<rect x="741.68" y="409.66" width="3.26" height="9.87" fill="#e0555a" stroke="#fff" stroke-width="0.5"/>
<rect x="741.68" y="401.77" width="3.26" height="7.89" fill="#7c4aa3" stroke="#fff" stroke-width="0.5"/>
<rect x="745.94" y="490.57" width="3.26" height="4.93" fill="#3398db" stroke="#fff" stroke-width="0.5"/>
<rect x="745.94" y="460.97" width="3.26" height="29.60" fill="#46a88a" stroke="#fff" stroke-width="0.5"/>
<rect x="745.94" y="363.53" width="3.26" height="97.43" fill="#f3ca58" stroke="#fff" stroke-width="0.5"/>
<rect x="745.94" y="359.83" width="3.26" height="3.70" fill="#e0555a" stroke="#fff" stroke-width="0.5"/>
<rect x="745.94" y="349.96" width="3.26" height="9.87" fill="#7c4aa3" stroke="#fff" stroke-width="0.5"/>
<clipPath id="gclip"><rect x="553.7" y="150" width="196.0" height="350"/></clipPath>
<g clip-path="url(#gclip)">
<text transform="translate(555.83,368.43) scale(1.13,1)" text-anchor="middle" font-size="10.6" fill="#262626" stroke="#262626" stroke-width="0.3">49</text>
<text transform="translate(560.09,402.97) scale(1.13,1)" text-anchor="middle" font-size="10.6" fill="#262626" stroke="#262626" stroke-width="0.3">35</text>
<text transform="translate(564.35,333.90) scale(1.13,1)" text-anchor="middle" font-size="10.6" fill="#262626" stroke="#262626" stroke-width="0.3">63</text>
<text transform="translate(568.61,378.30) scale(1.13,1)" text-anchor="middle" font-size="10.6" fill="#262626" stroke="#262626" stroke-width="0.3">45</text>
<text transform="translate(572.87,407.90) scale(1.13,1)" text-anchor="middle" font-size="10.6" fill="#262626" stroke="#262626" stroke-width="0.3">33</text>
<text transform="translate(577.13,321.56) scale(1.13,1)" text-anchor="middle" font-size="10.6" fill="#262626" stroke="#262626" stroke-width="0.3">68</text>
<text transform="translate(581.40,454.77) scale(1.13,1)" text-anchor="middle" font-size="10.6" fill="#262626" stroke="#262626" stroke-width="0.3">14</text>
<text transform="translate(585.66,333.90) scale(1.13,1)" text-anchor="middle" font-size="10.6" fill="#262626" stroke="#262626" stroke-width="0.3">63</text>
<text transform="translate(589.92,417.77) scale(1.13,1)" text-anchor="middle" font-size="10.6" fill="#262626" stroke="#262626" stroke-width="0.3">29</text>
<text transform="translate(594.18,321.56) scale(1.13,1)" text-anchor="middle" font-size="10.6" fill="#262626" stroke="#262626" stroke-width="0.3">68</text>
<text transform="translate(598.44,254.96) scale(1.13,1)" text-anchor="middle" font-size="10.6" fill="#262626" stroke="#262626" stroke-width="0.3">95</text>
<text transform="translate(602.70,422.70) scale(1.13,1)" text-anchor="middle" font-size="10.6" fill="#262626" stroke="#262626" stroke-width="0.3">27</text>
<text transform="translate(606.96,250.03) scale(1.13,1)" text-anchor="middle" font-size="10.6" fill="#262626" stroke="#262626" stroke-width="0.3">97</text>
<text transform="translate(611.22,435.03) scale(1.13,1)" text-anchor="middle" font-size="10.6" fill="#262626" stroke="#262626" stroke-width="0.3">22</text>
<text transform="translate(615.48,319.10) scale(1.13,1)" text-anchor="middle" font-size="10.6" fill="#262626" stroke="#262626" stroke-width="0.3">69</text>
<text transform="translate(619.74,353.63) scale(1.13,1)" text-anchor="middle" font-size="10.6" fill="#262626" stroke="#262626" stroke-width="0.3">55</text>
<text transform="translate(624.00,289.50) scale(1.13,1)" text-anchor="middle" font-size="10.6" fill="#262626" stroke="#262626" stroke-width="0.3">81</text>
<text transform="translate(628.27,294.43) scale(1.13,1)" text-anchor="middle" font-size="10.6" fill="#262626" stroke="#262626" stroke-width="0.3">79</text>
<text transform="translate(632.53,314.16) scale(1.13,1)" text-anchor="middle" font-size="10.6" fill="#262626" stroke="#262626" stroke-width="0.3">71</text>
<text transform="translate(636.79,336.36) scale(1.13,1)" text-anchor="middle" font-size="10.6" fill="#262626" stroke="#262626" stroke-width="0.3">62</text>
<text transform="translate(641.05,375.83) scale(1.13,1)" text-anchor="middle" font-size="10.6" fill="#262626" stroke="#262626" stroke-width="0.3">46</text>
<text transform="translate(645.31,267.30) scale(1.13,1)" text-anchor="middle" font-size="10.6" fill="#262626" stroke="#262626" stroke-width="0.3">90</text>
<text transform="translate(649.57,412.83) scale(1.13,1)" text-anchor="middle" font-size="10.6" fill="#262626" stroke="#262626" stroke-width="0.3">31</text>
<text transform="translate(653.83,326.50) scale(1.13,1)" text-anchor="middle" font-size="10.6" fill="#262626" stroke="#262626" stroke-width="0.3">66</text>
<text transform="translate(658.09,383.23) scale(1.13,1)" text-anchor="middle" font-size="10.6" fill="#262626" stroke="#262626" stroke-width="0.3">43</text>
<text transform="translate(662.35,469.57) scale(1.13,1)" text-anchor="middle" font-size="10.6" fill="#262626" stroke="#262626" stroke-width="0.3">8</text>
<text transform="translate(666.61,373.37) scale(1.13,1)" text-anchor="middle" font-size="10.6" fill="#262626" stroke="#262626" stroke-width="0.3">47</text>
<text transform="translate(670.87,272.23) scale(1.13,1)" text-anchor="middle" font-size="10.6" fill="#262626" stroke="#262626" stroke-width="0.3">88</text>
<text transform="translate(675.13,363.50) scale(1.13,1)" text-anchor="middle" font-size="10.6" fill="#262626" stroke="#262626" stroke-width="0.3">51</text>
<text transform="translate(679.40,296.90) scale(1.13,1)" text-anchor="middle" font-size="10.6" fill="#262626" stroke="#262626" stroke-width="0.3">78</text>
<text transform="translate(683.66,351.16) scale(1.13,1)" text-anchor="middle" font-size="10.6" fill="#262626" stroke="#262626" stroke-width="0.3">56</text>
<text transform="translate(687.92,398.03) scale(1.13,1)" text-anchor="middle" font-size="10.6" fill="#262626" stroke="#262626" stroke-width="0.3">37</text>
<text transform="translate(692.18,289.50) scale(1.13,1)" text-anchor="middle" font-size="10.6" fill="#262626" stroke="#262626" stroke-width="0.3">81</text>
<text transform="translate(696.44,356.10) scale(1.13,1)" text-anchor="middle" font-size="10.6" fill="#262626" stroke="#262626" stroke-width="0.3">54</text>
<text transform="translate(700.70,380.77) scale(1.13,1)" text-anchor="middle" font-size="10.6" fill="#262626" stroke="#262626" stroke-width="0.3">44</text>
<text transform="translate(704.96,287.03) scale(1.13,1)" text-anchor="middle" font-size="10.6" fill="#262626" stroke="#262626" stroke-width="0.3">82</text>
<text transform="translate(709.22,311.70) scale(1.13,1)" text-anchor="middle" font-size="10.6" fill="#262626" stroke="#262626" stroke-width="0.3">72</text>
<text transform="translate(713.48,324.03) scale(1.13,1)" text-anchor="middle" font-size="10.6" fill="#262626" stroke="#262626" stroke-width="0.3">67</text>
<text transform="translate(717.74,289.50) scale(1.13,1)" text-anchor="middle" font-size="10.6" fill="#262626" stroke="#262626" stroke-width="0.3">81</text>
<text transform="translate(722.00,375.83) scale(1.13,1)" text-anchor="middle" font-size="10.6" fill="#262626" stroke="#262626" stroke-width="0.3">46</text>
<text transform="translate(726.27,254.96) scale(1.13,1)" text-anchor="middle" font-size="10.6" fill="#262626" stroke="#262626" stroke-width="0.3">95</text>
<text transform="translate(730.53,410.37) scale(1.13,1)" text-anchor="middle" font-size="10.6" fill="#262626" stroke="#262626" stroke-width="0.3">32</text>
<text transform="translate(734.79,375.83) scale(1.13,1)" text-anchor="middle" font-size="10.6" fill="#262626" stroke="#262626" stroke-width="0.3">46</text>
<text transform="translate(739.05,250.03) scale(1.13,1)" text-anchor="middle" font-size="10.6" fill="#262626" stroke="#262626" stroke-width="0.3">97</text>
<text transform="translate(743.31,395.57) scale(1.13,1)" text-anchor="middle" font-size="10.6" fill="#262626" stroke="#262626" stroke-width="0.3">38</text>
<text transform="translate(747.57,343.76) scale(1.13,1)" text-anchor="middle" font-size="10.6" fill="#262626" stroke="#262626" stroke-width="0.3">59</text>
</g>
<text transform="translate(559.43,504.6) rotate(-90)" text-anchor="end" font-size="11" fill="#7d7f86">18</text>
<text transform="translate(576.47,504.6) rotate(-90)" text-anchor="end" font-size="11" fill="#7d7f86">22</text>
<text transform="translate(593.52,504.6) rotate(-90)" text-anchor="end" font-size="11" fill="#7d7f86">26</text>
<text transform="translate(610.56,504.6) rotate(-90)" text-anchor="end" font-size="11" fill="#7d7f86">30</text>
<text transform="translate(627.60,504.6) rotate(-90)" text-anchor="end" font-size="11" fill="#7d7f86">34</text>
<text transform="translate(644.65,504.6) rotate(-90)" text-anchor="end" font-size="11" fill="#7d7f86">38</text>
<text transform="translate(661.69,504.6) rotate(-90)" text-anchor="end" font-size="11" fill="#7d7f86">42</text>
<text transform="translate(678.73,504.6) rotate(-90)" text-anchor="end" font-size="11" fill="#7d7f86">46</text>
<text transform="translate(695.78,504.6) rotate(-90)" text-anchor="end" font-size="11" fill="#7d7f86">50</text>
<text transform="translate(712.82,504.6) rotate(-90)" text-anchor="end" font-size="11" fill="#7d7f86">54</text>
<text transform="translate(729.87,504.6) rotate(-90)" text-anchor="end" font-size="11" fill="#7d7f86">58</text>
<text transform="translate(746.91,504.6) rotate(-90)" text-anchor="end" font-size="11" fill="#7d7f86">62</text>
<rect x="773" y="275.20" width="9" height="8.6" fill="#1ea8cb"/>
<text x="788.7" y="282.10" font-size="11" fill="#262626">MAHMOUD AH...</text>
<rect x="773" y="292.30" width="9" height="8.6" fill="#df5189"/>
<text x="788.7" y="299.20" font-size="11" fill="#262626">Moataz Essam ...</text>
<rect x="773" y="309.40" width="9" height="8.6" fill="#ef8434"/>
<text x="788.7" y="316.30" font-size="11" fill="#262626">Aya khaled ahm...</text>
<rect x="773" y="326.50" width="9" height="8.6" fill="#2fbcb0"/>
<text x="788.7" y="333.40" font-size="11" fill="#262626">Farah Asraf Dora</text>
<rect x="773" y="343.60" width="9" height="8.6" fill="#7c4aa3"/>
<text x="788.7" y="350.50" font-size="11" fill="#262626">Mohamed Gam...</text>
<rect x="773" y="360.70" width="9" height="8.6" fill="#e0555a"/>
<text x="788.7" y="367.60" font-size="11" fill="#262626">Mazen Ahmed S...</text>
<rect x="773" y="377.80" width="9" height="8.6" fill="#f5c843"/>
<text x="788.7" y="384.70" font-size="11" fill="#262626">Mohab Ahmed</text>
<rect x="773" y="394.90" width="9" height="8.6" fill="#3ba87a"/>
<text x="788.7" y="401.80" font-size="11" fill="#262626">Ahmed Said Has...</text>
<rect x="773" y="412.00" width="9" height="8.6" fill="#3398db"/>
<text x="788.7" y="418.90" font-size="11" fill="#262626">Moaz Ahmed Al...</text>
</svg>
</body></html>
